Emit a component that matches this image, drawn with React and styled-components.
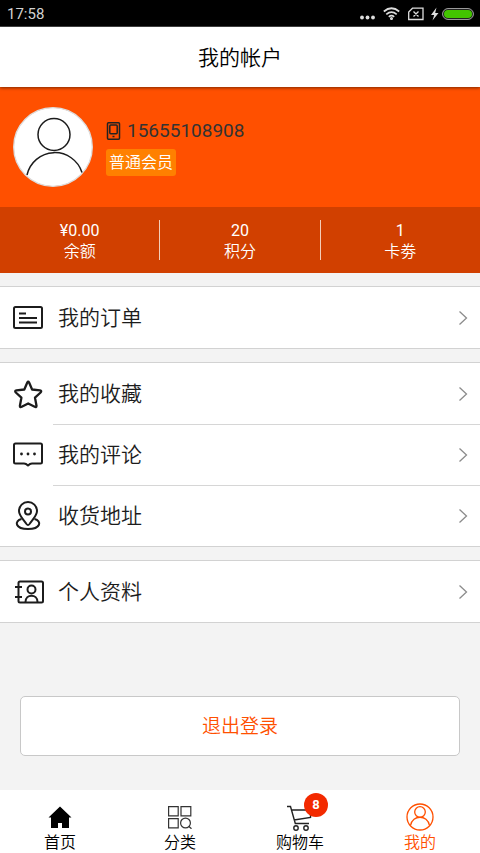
import React from "react";
import styled, { createGlobalStyle } from "styled-components";

const GlobalStyle = createGlobalStyle`
  *, *::before, *::after { box-sizing: border-box; }
  body {
    margin: 0;
    background: #f3f3f3;
    color: #1c1c1c;
    font-family: Roboto, "Noto Sans CJK SC", sans-serif;
    font-weight: 350;
  }
  button { font: inherit; color: inherit; cursor: pointer; }
`;

const Page = styled.div`
  display: flex;
  flex-direction: column;
  min-height: 100vh;
`;

const StatusBar = styled.div`
  display: flex;
  align-items: center;
  justify-content: space-between;
  height: 27px;
  padding: 1px 6px 0 7px;
  background: #000;
  border-bottom: 1px solid #444;
  color: #d2d2d2;
  font-size: 15px;
  font-weight: 400;
`;

const StatusIcons = styled.div`
  display: flex;
  align-items: center;
  gap: 8px;
`;

const Charge = styled.div`
  display: flex;
  align-items: center;
  gap: 3px;
`;

const TitleBar = styled.header`
  display: flex;
  align-items: center;
  justify-content: center;
  height: 60px;
  padding-top: 2px;
  background: #fff;
  z-index: 1;
  box-shadow: 0 1px 3px rgba(0, 0, 0, 0.5);
`;

const Title = styled.h1`
  margin: 0;
  font-size: 21px;
  line-height: 30px;
  font-weight: 350;
  color: #000;
`;

const Main = styled.main`
  display: flex;
  flex-direction: column;
  gap: 13px;
  flex: 1;
`;

const Profile = styled.section`
  background: #ff5000;
`;

const ProfileTop = styled.div`
  display: flex;
  align-items: center;
  gap: 13px;
  height: 120px;
  padding: 0 13px;
`;

const ProfileText = styled.div`
  display: flex;
  flex-direction: column;
  align-items: flex-start;
  gap: 5px;
`;

const Phone = styled.div`
  display: flex;
  align-items: center;
  gap: 6px;
  font-size: 19px;
  line-height: 26px;
  font-weight: 400;
  color: #333;
`;

const Level = styled.span`
  padding: 0 3px;
  border-radius: 3px;
  background: #ff8000;
  color: #fff;
  font-size: 16px;
  line-height: 27px;
`;

const Stats = styled.div`
  display: flex;
  padding: 13px 0;
  background: #d14000;
`;

const Stat = styled.button`
  flex: 1;
  display: flex;
  flex-direction: column;
  align-items: center;
  justify-content: center;
  height: 40px;
  padding: 1px 0 0;
  border: 0;
  background: none;
  color: #fff;
  font-size: 16px;
  line-height: 21px;

  & + & { border-left: 1px solid #f3cdb9; }
`;

const StatValue = styled.span`
  font-weight: 400;
`;

const Group = styled.nav`
  background: #fff;
  border-top: 1px solid #d2d2d2;
  border-bottom: 1px solid #d2d2d2;
`;

const Row = styled.a`
  display: flex;
  align-items: center;
  height: 61px;
  padding-left: 13px;
  color: inherit;
  text-decoration: none;
`;

const RowIcon = styled.span`
  display: flex;
  width: 40px;
`;

const RowBody = styled.span`
  display: flex;
  flex: 1;
  align-items: center;
  justify-content: space-between;
  height: 100%;
  padding: 0 12px 0 5px;
  font-size: 21px;
  line-height: 30px;

  ${Row} + ${Row} & { border-top: 1px solid #d6d6d6; }
`;

const Logout = styled.button`
  height: 60px;
  margin: 60px 20px 34px;
  padding: 2px 0 0;
  border: 1px solid #c8c8c8;
  border-radius: 5px;
  background: #fff;
  color: #ff5000;
  font-size: 19px;
  line-height: 26px;
`;

const TabBar = styled.nav`
  display: flex;
  height: 63px;
  background: #fff;
`;

const Tab = styled.a`
  flex: 1;
  display: flex;
  flex-direction: column;
  align-items: center;
  padding-top: 12px;
  color: ${(p) => (p.$active ? "#ff5000" : "#000")};
  font-size: 16px;
  line-height: 21px;
  text-decoration: none;
`;

const TabIcon = styled.span`
  position: relative;
  display: flex;
  align-items: center;
  justify-content: center;
  width: 30px;
  height: 30px;
`;

const Badge = styled.span`
  position: absolute;
  top: -9px;
  left: 19px;
  width: 24px;
  height: 24px;
  border-radius: 50%;
  background: #f32a00;
  color: #fff;
  font-size: 13px;
  line-height: 24px;
  font-weight: 700;
  text-align: center;
`;

const LineSvg = styled.svg.attrs({ "aria-hidden": true })`
  display: block;
  flex: none;
  fill: none;
  stroke: currentColor;
  stroke-width: 2;
  stroke-linejoin: round;
`;

const ChevronSvg = styled(LineSvg)`
  stroke: #8c8c8c;
  stroke-width: 1.3;
  stroke-linejoin: miter;
`;

const icons = {
  order: (
    <LineSvg width="30" height="30" viewBox="0 0 30 30">
      <rect x="1" y="4" width="28" height="21" rx="1.5" />
      <path d="M6 10.5h7M6 15h18M6 19.5h18" />
    </LineSvg>
  ),
  star: (
    <LineSvg width="30" height="30" viewBox="0 0 30 30">
      <path
        strokeWidth="2.3"
        d="M14.300 3.500q.9-1.700 1.800 0l3 7 7.800.9q2.200.5.700 2.100L22 18.700l1.500 8q0 2-1.800 1.100L15.200 24.500l-6.500 3.300q-1.900.9-1.800-1.100l1.500-8-5.600-5.200q-1.500-1.600.7-2.100l7.800-.9Z"
      />
    </LineSvg>
  ),
  comment: (
    <LineSvg width="30" height="30" viewBox="0 0 30 30">
      <path d="M2.500 3.500h25q1.500 0 1.500 1.500v17q0 1.500-1.500 1.500H19q-2 0-4 2-2-2-4-2H2.500Q1 23.500 1 22V5q0-1.500 1.500-1.500Z" />
      <g fill="currentColor" stroke="none">
        <circle cx="8.500" cy="14" r="1.400" />
        <circle cx="15" cy="14" r="1.400" />
        <circle cx="21.500" cy="14" r="1.400" />
      </g>
    </LineSvg>
  ),
  address: (
    <LineSvg width="30" height="30" viewBox="0 0 30 30">
      <path d="M13.500 23C10 18 6 14.500 6 10a9 9 0 0 1 18 0c0 4.500-4 8-7.500 13q-1.500 2-3 0Z" />
      <circle cx="15" cy="10.500" r="3" />
      <path d="M8.500 18C1 20 2 28 15 28s14-8 6.500-10" />
    </LineSvg>
  ),
  profile: (
    <LineSvg width="32" height="30" viewBox="0 0 32 30">
      <rect x="5.500" y="4.500" width="24.500" height="21" rx="1.500" />
      <path d="M2 10h7M2 20h7" />
      <circle cx="18.500" cy="12.500" r="4" />
      <path d="M12.500 25c0-8.500 12-8.500 12 0" />
    </LineSvg>
  ),
};

const groups = [
  [{ icon: "order", label: "我的订单" }],
  [
    { icon: "star", label: "我的收藏" },
    { icon: "comment", label: "我的评论" },
    { icon: "address", label: "收货地址" },
  ],
  [{ icon: "profile", label: "个人资料" }],
];

const stats = [
  ["¥0.00", "余额"],
  ["20", "积分"],
  ["1", "卡劵"],
];

const tabs = [
  {
    label: "首页",
    icon: (
      <svg width="24" height="24" viewBox="0 0 24 24" aria-hidden="true">
        <path d="M12 1.500 23.500 12.500H21V23h-7v-5h-4v5H3V12.500H.5Z" />
      </svg>
    ),
  },
  {
    label: "分类",
    icon: (
      <svg width="24" height="24" viewBox="0 0 24 24" fill="none" stroke="#333" strokeWidth="1.200" aria-hidden="true">
        <path d="M.6 1.600h9.600v9.300H.6ZM13 1.600h9.800v9.300H13ZM.6 13.600h9.600v9.300H.6Z" />
        <circle cx="17.500" cy="18" r="4.900" />
        <path d="m21 21.500 2.500 2.300" />
      </svg>
    ),
  },
  {
    label: "购物车",
    badge: "8",
    icon: (
      <svg width="28" height="28" viewBox="0 0 28 28" fill="none" stroke="#222" strokeWidth="1.400" aria-hidden="true">
        <path d="M1 3.500h3.500l4.800 17H23M6 7h18.500v7.500L8 17" />
        <circle cx="10" cy="25" r="2.200" />
        <circle cx="20" cy="25" r="2.200" />
      </svg>
    ),
  },
  {
    label: "我的",
    active: true,
    icon: (
      <svg width="28" height="28" viewBox="0 0 28 28" fill="none" stroke="#ff5000" strokeWidth="1.300" aria-hidden="true">
        <circle cx="14" cy="14" r="13" />
        <circle cx="14" cy="9" r="5.300" />
        <path d="M4.500 22.500c2-11 17-11 19 0" />
      </svg>
    ),
  },
];

export default function App() {
  return (
    <>
      <GlobalStyle />
      <Page>
        <StatusBar>
          <span>17:58</span>
          <StatusIcons>
            <svg width="15" height="12" viewBox="0 0 15 12" fill="#ddd" aria-hidden="true">
              <circle cx="2" cy="9.500" r="1.900" />
              <circle cx="7.500" cy="9.500" r="1.900" />
              <circle cx="13" cy="9.500" r="1.900" />
            </svg>
            <svg width="17" height="13" viewBox="0 0 17 13" fill="none" stroke="#ddd" strokeWidth="1.700" aria-hidden="true">
              <path d="M.8 4.500Q8.500-2 16.200 4.500M3.300 7.300q5.200-4.300 10.400 0M5.800 9.800q2.700-2.200 5.400 0" />
              <circle cx="8.500" cy="11.500" r=".7" />
            </svg>
            <Charge>
              <svg width="31" height="14" viewBox="0 0 31 14" fill="none" stroke="#ddd" strokeWidth="1.300" aria-hidden="true">
                <path d="M4.500 1.200H15v11.300H.7V5ZM5.500 4.500l5 5M10.500 4.500l-5 5" />
                <path d="M28.500.5 23 8h3.200l-1.700 5.500L30.500 6h-3.300Z" fill="#ddd" stroke="none" />
              </svg>
              <svg width="32" height="12" viewBox="0 0 32 12" aria-hidden="true">
                <rect x=".6" y=".6" width="30.800" height="10.800" rx="5.400" fill="#111" stroke="#aaa" />
                <rect x="2" y="2" width="28" height="8" rx="4" fill="#43c400" />
              </svg>
            </Charge>
          </StatusIcons>
        </StatusBar>
        <TitleBar>
          <Title>我的帐户</Title>
        </TitleBar>
        <Main>
          <Profile>
            <ProfileTop>
              <svg width="80" height="80" viewBox="0 0 80 80" fill="none" aria-hidden="true">
                <circle cx="40" cy="40" r="39.300" fill="#fff" stroke="#ddd" strokeWidth="1.300" />
                <g stroke="#1c1c1c" strokeWidth="1.500">
                  <circle cx="41" cy="27.500" r="16" />
                  <path d="M14 68A28.500 28.500 0 0 1 69 65.500" />
                </g>
              </svg>
              <ProfileText>
                <Phone>
                  <svg width="15" height="18" viewBox="0 0 15 18" fill="none" stroke="#222" strokeWidth="1.500" aria-hidden="true">
                    <rect x="1.500" y=".8" width="12" height="16.400" rx="1" />
                    <rect x="3.800" y="3" width="7.400" height="8.700" rx="1" />
                    <path d="M6.500 14.500h2" />
                  </svg>
                  15655108908
                </Phone>
                <Level>普通会员</Level>
              </ProfileText>
            </ProfileTop>
            <Stats>
              {stats.map(([value, label]) => (
                <Stat key={label} type="button">
                  <StatValue>{value}</StatValue>
                  <span>{label}</span>
                </Stat>
              ))}
            </Stats>
          </Profile>
          {groups.map((rows) => (
            <Group key={rows[0].label}>
              {rows.map((row) => (
                <Row key={row.label} href="#">
                  <RowIcon>{icons[row.icon]}</RowIcon>
                  <RowBody>
                    {row.label}
                    <ChevronSvg width="10" height="16" viewBox="0 0 10 16">
                      <path d="m1.500 1.500 7 6.500-7 6.500" />
                    </ChevronSvg>
                  </RowBody>
                </Row>
              ))}
            </Group>
          ))}
          <Logout type="button">退出登录</Logout>
        </Main>
        <TabBar>
          {tabs.map((tab) => (
            <Tab key={tab.label} href="#" $active={tab.active}>
              <TabIcon>
                {tab.icon}
                {tab.badge && <Badge>{tab.badge}</Badge>}
              </TabIcon>
              {tab.label}
            </Tab>
          ))}
        </TabBar>
      </Page>
    </>
  );
}
